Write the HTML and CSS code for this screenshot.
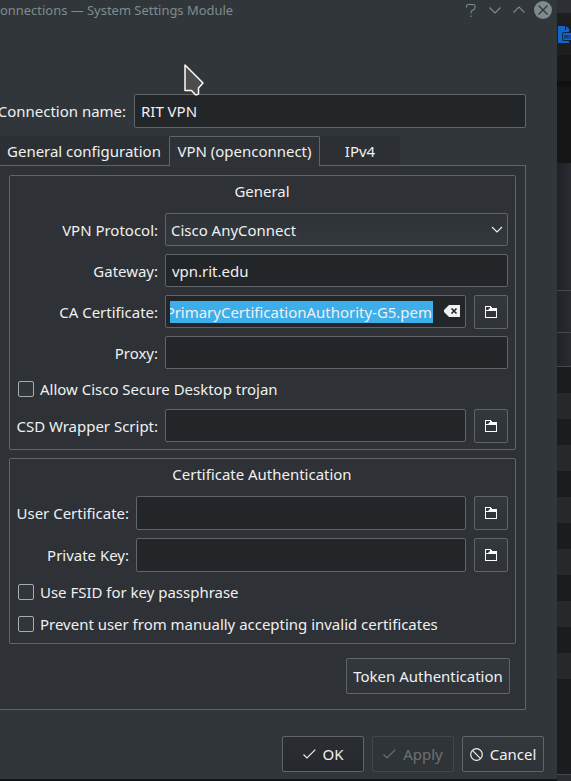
FILE: index.html
```html
<!DOCTYPE html>
<html lang="en">
<head>
<meta charset="utf-8">
<title>System Settings Module</title>
<link rel="stylesheet" href="styles.css">
</head>
<body>
<svg class="defs" aria-hidden="true">
  <symbol id="folder" viewBox="0 0 12 12"><path fill="#fcfcfc" fill-rule="evenodd" d="M0 0H6V1H7V2H12V12H0ZM1 1V4H3L5 2V1ZM1 5V11H11V5Z"/></symbol>
  <symbol id="check" viewBox="0 0 13 10"><path d="M.5 5.5 4 9 12.3 .7" fill="none" stroke="currentColor" stroke-width="1.2"/></symbol>
</svg>
<div class="desktop">
  <main class="window">
    <header class="titlebar">
      <span class="title">onnections — System Settings Module</span>
      <svg class="controls" width="88" height="20" viewBox="0 0 88 20" fill="none" stroke="#7f8c8d" stroke-width="1.1">
        <path d="M1.500 7.500V6.500Q1.500 4.500 3.500 4.500H8Q10 4.500 10 6.500V7.500Q10 9.500 8 10Q6 10.500 6 12.500V13.500M6 15.500V17"/>
        <path d="M24.500 7.500 30 13 35.500 7.500M48.500 12.500 54 7 59.500 12.500"/>
        <circle cx="78" cy="10" r="9" fill="#7f8c8d" stroke="none"/>
        <path d="M73.500 5.500 82.500 14.500M82.500 5.500 73.500 14.500" stroke="#31363b" stroke-width="1.300"/>
      </svg>
    </header>
    <div class="name-row"><label class="label name-label">Connection name:</label><div class="field">RIT VPN</div></div>
    <nav class="tabs">
      <div class="tab first">General configuration</div>
      <div class="tab active">VPN (openconnect)</div>
      <div class="tab last">IPv4</div>
    </nav>
    <section class="pane">
      <div class="group general">
        <h2>General</h2>
        <div class="row"><label class="label">VPN Protocol:</label><div class="field combo">Cisco AnyConnect<svg width="12" height="7" viewBox="0 0 12 7"><path d="M1 1 6 6 11 1" fill="none" stroke="#eff0f1" stroke-width="1.1"/></svg></div></div>
        <div class="row"><label class="label">Gateway:</label><div class="field">vpn.rit.edu</div></div>
        <div class="row"><label class="label">CA Certificate:</label>
          <div class="field selected"><span class="selection"><span>PrimaryCertificationAuthority-G5.pem</span></span><svg width="16" height="12" viewBox="0 0 16 12"><path d="M5 0H16V12H5L0 7V5Z" fill="#eff0f1"/><path d="M7.500 3.500 12.500 8.500M12.500 3.500 7.500 8.500" stroke="#232629" stroke-width="1.600"/></svg></div>
          <div class="browse"><svg width="12" height="12"><use href="#folder"/></svg></div></div>
        <div class="row"><label class="label">Proxy:</label><div class="field"></div></div>
        <div class="check csd-check"><i class="box"></i><span>Allow Cisco Secure Desktop trojan</span></div>
        <div class="row"><label class="label">CSD Wrapper Script:</label><div class="field"></div><div class="browse"><svg width="12" height="12"><use href="#folder"/></svg></div></div>
      </div>
      <div class="group auth">
        <h2>Certificate Authentication</h2>
        <div class="row"><label class="label">User Certificate:</label><div class="field"></div><div class="browse"><svg width="12" height="12"><use href="#folder"/></svg></div></div>
        <div class="row"><label class="label">Private Key:</label><div class="field"></div><div class="browse"><svg width="12" height="12"><use href="#folder"/></svg></div></div>
        <div class="check"><i class="box"></i><span>Use FSID for key passphrase</span></div>
        <div class="check"><i class="box"></i><span>Prevent user from manually accepting invalid certificates</span></div>
      </div>
      <div class="button token">Token Authentication</div>
    </section>
    <footer class="actions">
      <div class="button ok"><svg width="13" height="10"><use href="#check"/></svg>OK</div>
      <div class="button disabled"><svg width="13" height="10"><use href="#check"/></svg>Apply</div>
      <div class="button cancel"><svg width="13" height="13" viewBox="0 0 13 13" fill="none" stroke="currentColor" stroke-width="1.200"><circle cx="6.500" cy="6.500" r="5.800"/><path d="M2.400 2.400 10.600 10.600"/></svg>Cancel</div>
    </footer>
  </main>
  <aside class="behind">
    <div class="strip-top"></div>
    <div class="strip-icon"><svg width="13" height="18" viewBox="0 0 13 18"><path d="M0 0H7V4H11V17H0Z" fill="#1565c8"/><path d="M8 0 12 4H8Z" fill="#1565c8"/><rect x="4.500" y="6.500" width="14" height="8" rx="1.500" fill="#1565c8" stroke="#10243f"/><text x="6" y="13" class="badge">PH</text></svg></div>
    <div class="strip-tool"></div>
    <div class="strip-dark"></div>
    <div class="strip-panel a"></div>
    <div class="strip-panel b"></div>
    <div class="strip-panel c"></div>
    <div class="strip-rows"></div>
    <div class="strip-empty"></div>
    <div class="strip-end"></div>
  </aside>
</div>
<svg class="cursor" width="24" height="36" viewBox="0 0 24 36"><path d="M4 3V28.500H10.500L14 32.300Q15.500 33.500 17.500 32V26L22 21Z" fill="#4d4d4d" stroke="#fcfcfc" stroke-width="1.500" stroke-linejoin="round"/></svg>
</body>
</html>
```

FILE: styles.css
```css
* { box-sizing: border-box; }
body { margin: 0; background: #141518; color: #eff0f1; font: 14.97px/20px "Noto Sans", sans-serif; overflow: hidden; }
svg { display: block; flex: none; }
.defs { display: none; }
.desktop { display: flex; height: 781px; }
.window { width: 557px; height: 779px; flex: none; background: #31363b; overflow: hidden; display: flex; flex-direction: column; }
.titlebar { height: 94px; display: flex; justify-content: space-between; align-items: flex-start; padding-right: 4px; flex: none; }
.title { color: #7f8c8d; font-size: 12.95px; white-space: nowrap; }
.name-row { display: flex; height: 34px; width: 526px; flex: none; }
.name-label { width: 126px; }
.label { display: flex; justify-content: flex-end; align-items: center; white-space: nowrap; flex: none; margin-right: 8px; }
.field { flex: 1; min-width: 0; display: flex; align-items: center; background: #232629; border: 1px solid #616569; border-radius: 2px; padding: 0 6px; white-space: nowrap; }
.tabs { display: flex; height: 30px; margin-top: 8px; flex: none; position: relative; z-index: 1; }
.tab { height: 29px; background: #2c3034; display: flex; align-items: center; justify-content: center; white-space: nowrap; padding-top: 1px; }
.first { width: 169px; padding-right: 1px; }
.active { width: 151px; height: 30px; padding: 0 0 1px; background: #2e3135; border: 1px solid #616569; border-bottom: 0; border-radius: 2px 2px 0 0; }
.last { width: 80px; }
.pane { width: 526px; height: 545px; margin-top: -1px; flex: none; background: #2e3135; border: 1px solid #616569; border-left: 0; border-radius: 0 0 2px 0; padding: 9px 9px 0; display: flex; flex-direction: column; }
.group { border: 1px solid #616569; border-radius: 2px; padding: 5px 7px 0 6px; flex: none; display: flex; flex-direction: column; }
.general { height: 275px; --label: 142px; }
.auth { height: 186px; margin-top: 8px; --label: 113px; }
h2 { font: inherit; margin: 0; height: 32px; text-align: center; line-height: 21px; flex: none; }
.row { display: flex; height: 34px; flex: none; }
.row .label { width: var(--label); height: 34px; margin-right: 7px; }
.general .row { margin-bottom: 7px; }
.general .field { height: 33px; }
.auth .row { margin-bottom: 8px; }
.combo { background: linear-gradient(#2f3337, #33383d); justify-content: space-between; padding: 0 4px 0 5px; }
.combo svg { margin-bottom: 1px; }
.browse, .button { border: 1px solid #616569; border-radius: 2px; background: linear-gradient(#33383d, #2f3337); display: flex; align-items: center; justify-content: center; }
.browse { width: 34px; margin-left: 8px; flex: none; }
.selected { padding: 0 5px 0 4px; justify-content: space-between; }
.selected svg { margin-bottom: 2px; }
.selection { width: 263px; height: 22px; background: #3daee9; display: flex; justify-content: flex-end; align-items: center; overflow: hidden; padding-right: 1px; }
.check { display: flex; align-items: center; gap: 6px; margin-left: 2px; height: 16px; margin-bottom: 16px; white-space: nowrap; flex: none; }
.row + .check { margin-top: 4px; }
.general .csd-check { margin: 4px 0 12px 2px; }
.box { width: 16px; height: 16px; border: 1px solid #a9acae; border-radius: 2px; background: #31363b; }
.token { width: 164px; height: 36px; align-self: flex-end; margin: 14px 6px 0 0; flex: none; }
.actions { display: flex; gap: 8px; margin: 26px 13px 0 0; justify-content: flex-end; }
.actions .button { width: 82px; height: 36px; gap: 7px; }
.actions .ok { background: linear-gradient(#2a2e32, #25292d); }
.actions .disabled { color: #6c7174; border-color: #42474b; background: #2f3438; }
.behind { width: 14px; height: 781px; display: flex; flex-direction: column; background: #1b1c1f; overflow: hidden; }
.behind > div { flex: none; }
.strip-top { height: 13px; background: #2c3035; }
.strip-icon { height: 42px; padding: 13px 0 0 1px; background: #1e1e1e; overflow: hidden; }
.strip-tool { height: 26px; background: #181818; }
.strip-dark { height: 82px; background: linear-gradient(#0e0e0e, #161616 8px); }
.strip-panel { background: linear-gradient(90deg, #1f2326, #282c30); border-bottom: 1px solid #44484b; }
.a { height: 128px; }
.b { height: 42px; }
.c { height: 34px; }
.strip-rows { height: 312px; background: repeating-linear-gradient(#1b1c1f 0 26px, #25292c 26px 52px); }
.strip-empty { height: 95px; background: #1b1c1f; }
.strip-end { height: 7px; background: #292d31; border-top: 1px solid #44484b; }
.badge { font: bold 5px "Noto Sans", sans-serif; fill: #10243f; }
.cursor { position: absolute; left: 181px; top: 62px; z-index: 2; }
```
